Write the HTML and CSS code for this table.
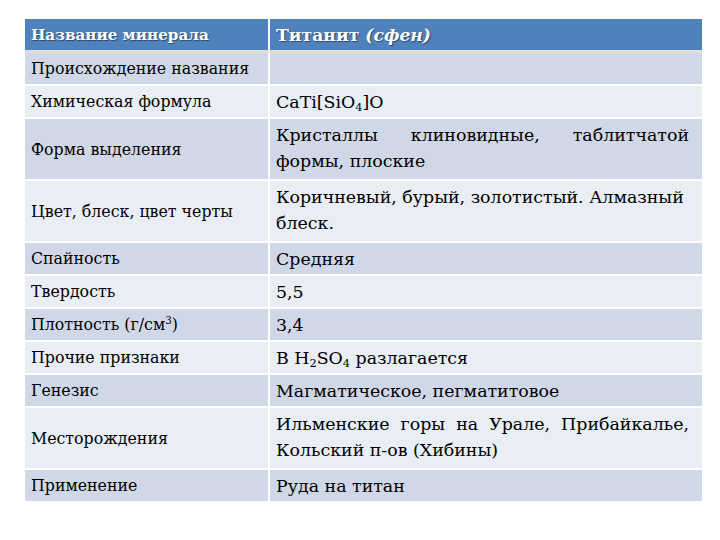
FILE: index.html
```html
<!DOCTYPE html>
<html lang="ru">
<head>
<meta charset="utf-8">
<link rel="stylesheet" href="styles.css">
</head>
<body>
<table class="mineral">
  <colgroup><col class="c1"><col class="c2"></colgroup>
  <thead>
    <tr class="head">
      <th class="k">Название минерала</th>
      <th class="v">Титанит <i>(сфен)</i></th>
    </tr>
  </thead>
  <tbody>
    <tr class="dark h1"><td class="k">Происхождение названия</td><td class="v"></td></tr>
    <tr class="light h1"><td class="k">Химическая формула</td><td class="v">CaTi[SiO<sub>4</sub>]O</td></tr>
    <tr class="dark h2"><td class="k">Форма выделения</td><td class="v j">Кристаллы клиновидные, таблитчатой формы, плоские</td></tr>
    <tr class="light h2"><td class="k">Цвет, блеск, цвет черты</td><td class="v">Коричневый, бурый, золотистый. Алмазный блеск.</td></tr>
    <tr class="dark h1"><td class="k">Спайность</td><td class="v">Средняя</td></tr>
    <tr class="light h1"><td class="k">Твердость</td><td class="v">5,5</td></tr>
    <tr class="dark h1"><td class="k">Плотность (г/см<sup>3</sup>)</td><td class="v">3,4</td></tr>
    <tr class="light h1"><td class="k">Прочие признаки</td><td class="v">В H<sub>2</sub>SO<sub>4</sub> разлагается</td></tr>
    <tr class="dark h1"><td class="k">Генезис</td><td class="v">Магматическое, пегматитовое</td></tr>
    <tr class="light h2"><td class="k">Месторождения</td><td class="v j">Ильменские горы на Урале, Прибайкалье, Кольский п-ов (Хибины)</td></tr>
    <tr class="dark h1"><td class="k">Применение</td><td class="v">Руда на титан</td></tr>
  </tbody>
</table>
</body>
</html>
```

FILE: styles.css
```css
html, body {
  margin: 0;
  padding: 0;
  background: #ffffff;
}
body {
  font-family: "DejaVu Serif", serif;
  color: #000;
  padding: 19px 0 0 25px;
}
.mineral {
  border-collapse: collapse;
  width: 677px;
  table-layout: fixed;
}
.c1 { width: 244px; }
.c2 { width: 433px; }
.mineral th,
.mineral td {
  font-family: "DejaVu Serif", serif;
  border: 2px solid #ffffff;
  padding: 0;
  vertical-align: middle;
  text-align: left;
}
.mineral tr > :first-child { border-left: none; }
.mineral tr > :last-child { border-right: none; }
.mineral thead th { border-top: none; }
.mineral tbody tr:last-child td { border-bottom: none; }
.mineral .head th {
  background: #4f81bd;
  color: #ffffff;
  height: 31px;
  border-bottom: 3px solid #e4dcd6;
  text-shadow: 1px 1px 1px rgba(0,0,0,0.45);
}
.mineral .head .k {
  font-size: 15.2px;
  font-weight: bold;
  padding-left: 6px;
}
.mineral .head .v {
  font-size: 17.2px;
  font-weight: bold;
  padding-left: 6px;
}
.dark td { background: #d0d8e8; }
.light td { background: #e9edf4; }
.h1 td { height: 31px; }
.h2 td { height: 57px; }
.mineral .k {
  font-size: 15.8px;
  padding-left: 6px;
}
.mineral .v {
  font-size: 17.4px;
  line-height: 26px;
  padding: 0 13px 0 6px;
}
.mineral .h2 .v { vertical-align: top; padding-top: 3px; }
.mineral .j { text-align: justify; }
sub, sup {
  font-size: 0.65em;
  line-height: 0;
}
sub { vertical-align: -0.3em; }
sup { vertical-align: 0.55em; }
```
